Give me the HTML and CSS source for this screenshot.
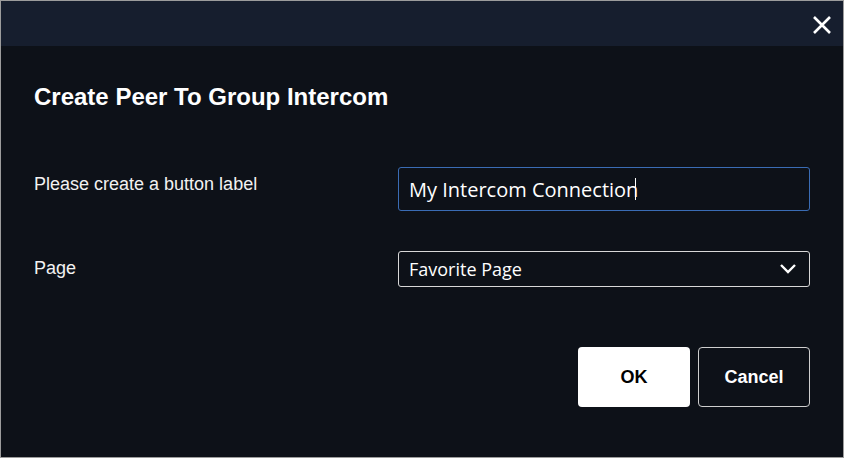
FILE: index.html
```html
<!DOCTYPE html>
<html lang="en">
<head>
  <meta charset="UTF-8">
  <meta name="viewport" content="width=device-width, initial-scale=1.0">
  <title>Create Peer To Group Intercom</title>
  <link rel="stylesheet" href="styles.css">
</head>
<body>
  <div class="dialog">
    <div class="dialog-header">
      <button class="close-btn" aria-label="Close">
        <svg width="20" height="20" viewBox="0 0 20 20">
          <path d="M2 2 L18 18 M18 2 L2 18" stroke="#fff" stroke-width="2.6" stroke-linecap="butt" fill="none"/>
        </svg>
      </button>
    </div>
    <div class="dialog-body">
      <h1 class="title">Create Peer To Group Intercom</h1>
      <div class="form">
        <label class="label" for="btnLabel">Please create a button label</label>
        <div class="field">
          <input id="btnLabel" class="text-input" type="text" value="My Intercom Connection">
          <span class="caret"></span>
        </div>
        <label class="label">Page</label>
        <div class="select">
          <span>Favorite Page</span>
          <svg width="18" height="12" viewBox="0 0 18 12">
            <path d="M2 2 L9 9 L16 2" stroke="#fff" stroke-width="2.4" fill="none"/>
          </svg>
        </div>
      </div>
      <div class="actions">
        <button class="btn btn-ok">OK</button>
        <button class="btn btn-cancel">Cancel</button>
      </div>
    </div>
  </div>
</body>
</html>
```

FILE: styles.css
```css
html, body {
  margin: 0;
  padding: 0;
  background: #0d1118;
}

body {
  font-family: 'Liberation Sans', Arial, sans-serif;
  color: #fff;
}

.dialog {
  box-sizing: border-box;
  width: 844px;
  height: 458px;
  border: 1px solid #9c9c9c;
  background: #0d1118;
  display: flex;
  flex-direction: column;
}

.dialog-header {
  height: 45px;
  background: #161e2e;
  display: flex;
  justify-content: flex-end;
  align-items: center;
}

.close-btn {
  background: none;
  border: none;
  padding: 0;
  margin-right: 11px;
  margin-top: 3px;
  width: 20px;
  height: 20px;
  cursor: pointer;
}

.dialog-body {
  padding: 37px 33px 0 33px;
}

.title {
  margin: 0;
  font-size: 24px;
  font-weight: bold;
  line-height: 28px;
}

.form {
  margin-top: 56px;
  display: grid;
  grid-template-columns: 364px 412px;
  row-gap: 40px;
}

.label {
  font-size: 18px;
  line-height: 20px;
  color: #f2f2f2;
  padding-top: 7px;
}

.field {
  position: relative;
}

.text-input {
  box-sizing: border-box;
  width: 412px;
  height: 44px;
  background: #0d1118;
  border: 1.5px solid #3a6cb4;
  border-radius: 3px;
  color: #fff;
  font-family: 'Open Sans', 'Noto Sans', sans-serif;
  font-size: 20px;
  padding: 0 10px;
  outline: none;
}

.caret {
  position: absolute;
  left: 237px;
  top: 11px;
  width: 1px;
  height: 22px;
  background: #fff;
}

.select {
  box-sizing: border-box;
  width: 412px;
  height: 36px;
  border: 1px solid #d8d8d8;
  border-radius: 3px;
  display: flex;
  align-items: center;
  justify-content: space-between;
  padding: 0 12px 0 10px;
  font-family: 'Open Sans', 'Noto Sans', sans-serif;
  font-size: 18px;
}

.actions {
  margin-top: 60px;
  display: flex;
  justify-content: flex-end;
  gap: 8px;
}

.btn {
  width: 112px;
  height: 60px;
  border-radius: 4px;
  font-family: 'Liberation Sans', Arial, sans-serif;
  font-size: 18px;
  font-weight: bold;
  cursor: pointer;
}

.btn-ok {
  background: #fff;
  color: #000;
  border: none;
}

.btn-cancel {
  background: #0d1118;
  color: #fff;
  border: 1px solid #cfcfcf;
}
```
